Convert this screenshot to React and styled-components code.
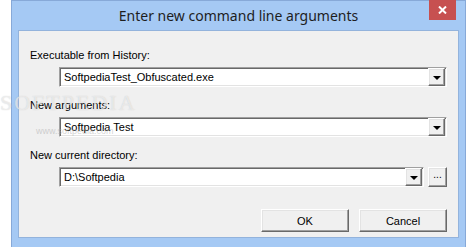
import styled, { createGlobalStyle } from 'styled-components'

const Global = createGlobalStyle`
  html, body { margin: 0; padding: 0; background: #ffffff; }
  body { width: 467px; height: 247px; overflow: hidden; }
`

const Page = styled.div`
  position: relative;
  padding-left: 11px;
  width: 467px;
  height: 247px;
  box-sizing: border-box;
`

const Frame = styled.div`
  width: 455px;
  height: 247px;
  box-sizing: border-box;
  background: #a5c9f4;
  border: 1px solid #87a9d8;
  border-bottom: none;
  display: flex;
  flex-direction: column;
`

const TitleBar = styled.div`
  position: relative;
  height: 29px;
  display: flex;
  align-items: center;
  justify-content: center;
  font-family: 'Noto Sans', 'Open Sans', sans-serif;
  font-size: 14px;
  color: #1e1e1e;
  padding-bottom: 1px;
  box-sizing: border-box;
`

const CloseButton = styled.div`
  position: absolute;
  top: -1px;
  right: 9px;
  width: 27px;
  height: 20px;
  background: #c75050;
  display: flex;
  align-items: center;
  justify-content: center;
`

const Client = styled.div`
  margin: 0 6px;
  height: 208px;
  background: #f0f0f0;
  border: 1px solid #93b3dc;
  box-sizing: border-box;
  padding: 17px 11px 0 11px;
  display: flex;
  flex-direction: column;
  font-family: 'Liberation Sans', Arial, sans-serif;
  font-size: 11px;
  color: #000;
`

const Field = styled.div`
  display: flex;
  flex-direction: column;
  gap: 5px;
  margin-bottom: 11px;
`

const Label = styled.div`
  height: 14px;
  line-height: 14px;
`

const Row = styled.div`
  display: flex;
  gap: 4px;
  padding-left: 29px;
`

const Combo = styled.div`
  flex: 1;
  height: 20px;
  box-sizing: border-box;
  background: #fff;
  border-top: 1px solid #a0a0a0;
  border-left: 1px solid #a0a0a0;
  border-right: 1px solid #ffffff;
  border-bottom: 1px solid #ffffff;
  box-shadow: inset 1px 1px 0 #696969, inset -1px -1px 0 #e3e3e3;
  display: flex;
  align-items: center;
  padding: 1px 1px 1px 4px;
`

const ComboText = styled.span`
  flex: 1;
  line-height: 16px;
`

const RaisedButton = styled.div`
  box-sizing: border-box;
  background: #f0f0f0;
  border-top: 1px solid #ffffff;
  border-left: 1px solid #ffffff;
  border-right: 1px solid #696969;
  border-bottom: 1px solid #696969;
  box-shadow: inset -1px -1px 0 #a0a0a0, inset 1px 1px 0 #e3e3e3;
  display: flex;
  align-items: center;
  justify-content: center;
`

const DropButton = styled(RaisedButton)`
  width: 17px;
  height: 18px;
`

const Arrow = styled.span`
  width: 0;
  height: 0;
  border-left: 4px solid transparent;
  border-right: 4px solid transparent;
  border-top: 4px solid #000;
  margin-top: 1px;
`

const BrowseButton = styled(RaisedButton)`
  width: 19px;
  height: 20px;
  font-size: 10px;
  line-height: 10px;
  padding-bottom: 4px;
`

const Buttons = styled.div`
  display: flex;
  justify-content: flex-end;
  gap: 10px;
  margin-top: 11px;
`

const PushButton = styled(RaisedButton)`
  width: 88px;
  height: 23px;
`

const Watermark = styled.div`
  position: absolute;
  left: 0;
  top: 90px;
  pointer-events: none;
  font-family: 'Liberation Serif', serif;
  color: rgba(255, 255, 255, 0.55);
  text-shadow: 0 0 1px rgba(150, 150, 150, 0.45);
`

const Mark = styled.div`
  font-size: 22px;
  letter-spacing: 2px;
`

const MarkUrl = styled.div`
  font-family: 'Liberation Sans', sans-serif;
  font-size: 9px;
  color: rgba(170, 170, 170, 0.5);
  text-shadow: none;
  margin: 10px 0 0 36px;
`

const fields = [
  { label: 'Executable from History:', value: 'SoftpediaTest_Obfuscated.exe' },
  { label: 'New arguments:', value: 'Softpedia Test' },
  { label: 'New current directory:', value: 'D:\\Softpedia', browse: true },
]

export default function App() {
  return (
    <Page>
      <Global />
      <Frame>
        <TitleBar>
          Enter new command line arguments
          <CloseButton>
            <svg width="9" height="8" viewBox="0 0 9 8">
              <path d="M1 0.5 L8 7.5 M8 0.5 L1 7.5" stroke="#fff" strokeWidth="2" />
            </svg>
          </CloseButton>
        </TitleBar>
        <Client>
          {fields.map(f => (
            <Field key={f.label}>
              <Label>{f.label}</Label>
              <Row>
                <Combo>
                  <ComboText>{f.value}</ComboText>
                  <DropButton><Arrow /></DropButton>
                </Combo>
                {f.browse && <BrowseButton>...</BrowseButton>}
              </Row>
            </Field>
          ))}
          <Buttons>
            <PushButton>OK</PushButton>
            <PushButton>Cancel</PushButton>
          </Buttons>
        </Client>
      </Frame>
      <Watermark>
        <Mark>SOFTPEDIA</Mark>
        <MarkUrl>www.softpedia.com</MarkUrl>
      </Watermark>
    </Page>
  )
}
